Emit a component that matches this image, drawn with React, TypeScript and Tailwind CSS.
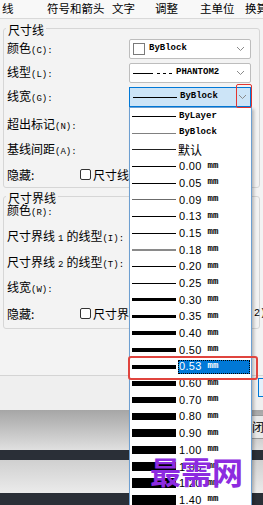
import React from "react";

const CJK = "font-['Noto_Sans_CJK_SC',sans-serif]";
const MONO = "font-['Liberation_Mono',monospace]";

type Item = { text: string; kind: "mono" | "cjk" | "mm"; h: number; color?: string; selected?: boolean };

const ITEMS: Item[] = [
  { text: "ByLayer", kind: "mono", h: 1 },
  { text: "ByBlock", kind: "mono", h: 1, color: "#808080" },
  { text: "默认", kind: "cjk", h: 1, color: "#222" },
  { text: "0.00", kind: "mm", h: 1 },
  { text: "0.05", kind: "mm", h: 1 },
  { text: "0.09", kind: "mm", h: 1, color: "#6b6b6b" },
  { text: "0.13", kind: "mm", h: 1 },
  { text: "0.15", kind: "mm", h: 1 },
  { text: "0.18", kind: "mm", h: 2, color: "#8a8a8a" },
  { text: "0.20", kind: "mm", h: 1 },
  { text: "0.25", kind: "mm", h: 1 },
  { text: "0.30", kind: "mm", h: 3 },
  { text: "0.35", kind: "mm", h: 3 },
  { text: "0.40", kind: "mm", h: 4 },
  { text: "0.50", kind: "mm", h: 4 },
  { text: "0.53", kind: "mm", h: 4, selected: true },
  { text: "0.60", kind: "mm", h: 5 },
  { text: "0.70", kind: "mm", h: 6 },
  { text: "0.80", kind: "mm", h: 7 },
  { text: "0.90", kind: "mm", h: 8 },
  { text: "1.00", kind: "mm", h: 8 },
  { text: "1.06", kind: "mm", h: 9 },
  { text: "1.20", kind: "mm", h: 10 },
  { text: "1.40", kind: "mm", h: 10 },
];

function Chevron() {
  return (
    <svg width="9" height="6" viewBox="0 0 9 6" className="shrink-0">
      <polyline points="1,1 4.5,4.5 8,1" fill="none" stroke="#8a8a8a" strokeWidth="1" />
    </svg>
  );
}

// label: chinese part + small latin part
function Label({ cn, key2, extra }: { cn: string; key2: string; extra?: React.ReactNode }) {
  return (
    <span className="flex items-baseline whitespace-nowrap">
      <span className="text-[12px]">{cn}</span>
      {extra}
      <span className={`${MONO} text-[9px]`}>{key2}</span>
    </span>
  );
}

function Check() {
  return <span className="w-[11px] h-[11px] border border-[#333] rounded-[2px] bg-white shrink-0" />;
}

export default function App() {
  return (
    <div className={`relative w-[263px] h-[505px] overflow-hidden bg-[#f3f3f3] text-black ${CJK} flex flex-col`}>
      {/* main dialog area */}
      <div className="h-[375px] flex flex-col shrink-0">
        {/* tabs */}
        <div className="h-[19px] flex items-center border-b border-[#d9d9d9] bg-[#f8f8f8] text-[11.5px] leading-none whitespace-nowrap">
          <span className="w-[47px] pl-[2px] shrink-0">线</span>
          <span className="w-[65px] shrink-0">符号和箭头</span>
          <span className="w-[43px] shrink-0">文字</span>
          <span className="w-[45px] shrink-0">调整</span>
          <span className="w-[45px] shrink-0">主单位</span>
          <span className="shrink-0">换算</span>
        </div>

        {/* 尺寸线 */}
        <fieldset className="mx-[3px] border border-[#d6d6d6] rounded-[3px] px-[3px]">
          <legend className="-ml-[1px] px-[2px] pt-[4px] text-[12px] leading-[14px]">尺寸线</legend>
          <div className="h-[24px] flex items-center">
            <div className="w-[122px]"><Label cn="颜色" key2="(C):" /></div>
            <div className="w-[122px] h-[20px] border border-[#bdbdbd] rounded-[2px] bg-white flex items-center pl-[3px] pr-[5px]">
              <span className="w-[12px] h-[12px] border border-[#7a7a7a] bg-white" />
              <span className={`${MONO} font-bold text-[9px] ml-[4px]`}>ByBlock</span>
              <span className="ml-auto"><Chevron /></span>
            </div>
          </div>
          <div className="h-[24px] flex items-center">
            <div className="w-[122px]"><Label cn="线型" key2="(L):" /></div>
            <div className="w-[122px] h-[20px] border border-[#bdbdbd] rounded-[2px] bg-white flex items-center pl-[3px] pr-[5px]">
              <span className="w-[20px] h-px bg-black" />
              <span className="flex gap-[3px] ml-[4px]">
                <span className="w-[3px] h-px bg-black" />
                <span className="w-[3px] h-px bg-black" />
                <span className="w-[3px] h-px bg-black" />
              </span>
              <span className={`${MONO} font-bold text-[9px] ml-[4px]`}>PHANTOM2</span>
              <span className="ml-auto"><Chevron /></span>
            </div>
          </div>
          <div className="h-[24px] flex items-center">
            <div className="w-[122px]"><Label cn="线宽" key2="(G):" /></div>
            <div className="w-[122px] h-[20px] border border-[#0078d7] bg-[#cce4f7] flex items-center pl-[3px]">
              <span className="w-[44px] h-px bg-black" />
              <span className={`${MONO} font-bold text-[9px] ml-[3px]`}>ByBlock</span>
              <span className="ml-auto w-[15px] flex justify-center"><Chevron /></span>
            </div>
          </div>
          <div className="mt-[3px] h-[25px] flex items-center"><Label cn="超出标记" key2="(N):" /></div>
          <div className="h-[25px] flex items-center"><Label cn="基线间距" key2="(A):" /></div>
          <div className="h-[25px] flex items-center">
            <span className="w-[73px] text-[12px]">隐藏:</span>
            <Check />
            <span className="ml-[2px] text-[12px] whitespace-nowrap">尺寸线</span>
          </div>
        </fieldset>

        {/* 尺寸界线 */}
        <fieldset className="mx-[3px] border border-[#d6d6d6] rounded-[3px] px-[3px] pb-[2px]">
          <legend className="-ml-[1px] px-[2px] pt-[3px] text-[12px] leading-[14px]">尺寸界线</legend>
          <div className="h-[12px] flex items-center"><Label cn="颜色" key2="(R):" /></div>
          <div className="mt-[7px] h-[26px] flex items-center">
            <Label cn="尺寸界线" key2="(I):" extra={<><span className={`${MONO} text-[9px] px-[3px]`}>1</span><span className="text-[12px]">的线型</span></>} />
          </div>
          <div className="h-[25px] flex items-center">
            <Label cn="尺寸界线" key2="(T):" extra={<><span className={`${MONO} text-[9px] px-[3px]`}>2</span><span className="text-[12px]">的线型</span></>} />
          </div>
          <div className="h-[26px] flex items-center"><Label cn="线宽" key2="(W):" /></div>
          <div className="h-[25px] flex items-center">
            <span className="w-[73px] text-[12px] shrink-0">隐藏:</span>
            <Check />
            <span className="ml-[2px] text-[12px] whitespace-nowrap">尺寸界</span>
            <span className={`ml-auto -mr-[10px] ${MONO} text-[10px] whitespace-nowrap`}>2)</span>
          </div>
        </fieldset>
      </div>

      {/* footer of dialog */}
      <div className="h-[35px] shrink-0 border-t border-[#d4d4d4] bg-[#efefef] pl-[258px] pt-[2px]">
        <div className="w-[30px] h-[19px] border border-[#0078d7] bg-[#e5f1fb]" />
      </div>
      <div className="h-[40px] shrink-0 bg-linear-to-b from-[#a6a6a6] to-[#e0e0e0] pl-[238px] pt-[5px]">
        <div className="w-[40px] h-[24px] border border-[#9a9a9a] bg-[#e9e9e9] pl-[1px] flex items-center text-[12px] whitespace-nowrap">关闭</div>
      </div>
      <div className="h-[10px] shrink-0 bg-[#2a2f37]" />
      <div className="h-[33px] shrink-0 bg-linear-to-b from-[#d0d0d0] to-[#ebebeb]" />
      <div className="flex-1 bg-[#2a2f37]" />

      {/* dropdown list */}
      <div className="absolute left-[129px] top-[107px] w-[123px] h-[420px] border border-[#6d9fd1] bg-white shadow-[2px_2px_3px_rgba(0,0,0,0.25)]">
        {ITEMS.map((it) => (
          <div key={it.text} className="h-[16.7px] flex items-center pl-[2px]">
            <span className="w-[44px] shrink-0" style={{ height: it.h, background: it.color ?? "#000" }} />
            {it.selected ? (
              <span className="ml-[2px] h-[14px] flex-1 mr-[1px] bg-[#0078d7] outline-1 outline-dotted outline-black -outline-offset-1 flex items-center pl-[1px] text-white">
                <span className="font-['Liberation_Sans',sans-serif] text-[11px] tracking-[0.3px]">{it.text}</span>
                <span className={`${MONO} font-bold text-[9px] ml-[6px]`}>mm</span>
              </span>
            ) : it.kind === "mono" ? (
              <span className={`${MONO} font-bold text-[9px] ml-[3px]`}>{it.text}</span>
            ) : it.kind === "cjk" ? (
              <span className="text-[12px] ml-[2px] leading-none">{it.text}</span>
            ) : (
              <span className="flex items-center ml-[3px]">
                <span className="font-['Liberation_Sans',sans-serif] text-[11px] tracking-[0.3px]">{it.text}</span>
                <span className={`${MONO} font-bold text-[9px] ml-[6px]`}>mm</span>
              </span>
            )}
          </div>
        ))}
      </div>

      {/* red annotation boxes */}
      <div className="absolute left-[236px] top-[84px] w-[16px] h-[24px] border-[1.5px] border-[#e3342f] rounded-[2px]" />
      <div className="absolute left-[128px] top-[356px] w-[130px] h-[24px] border-2 border-[#e0443e] rounded-[3px]" />

      {/* watermark */}
      <div className="absolute left-[150px] top-[455px] text-[31px] leading-none font-semibold text-[#8d2be0] whitespace-nowrap">最需网</div>
    </div>
  );
}
